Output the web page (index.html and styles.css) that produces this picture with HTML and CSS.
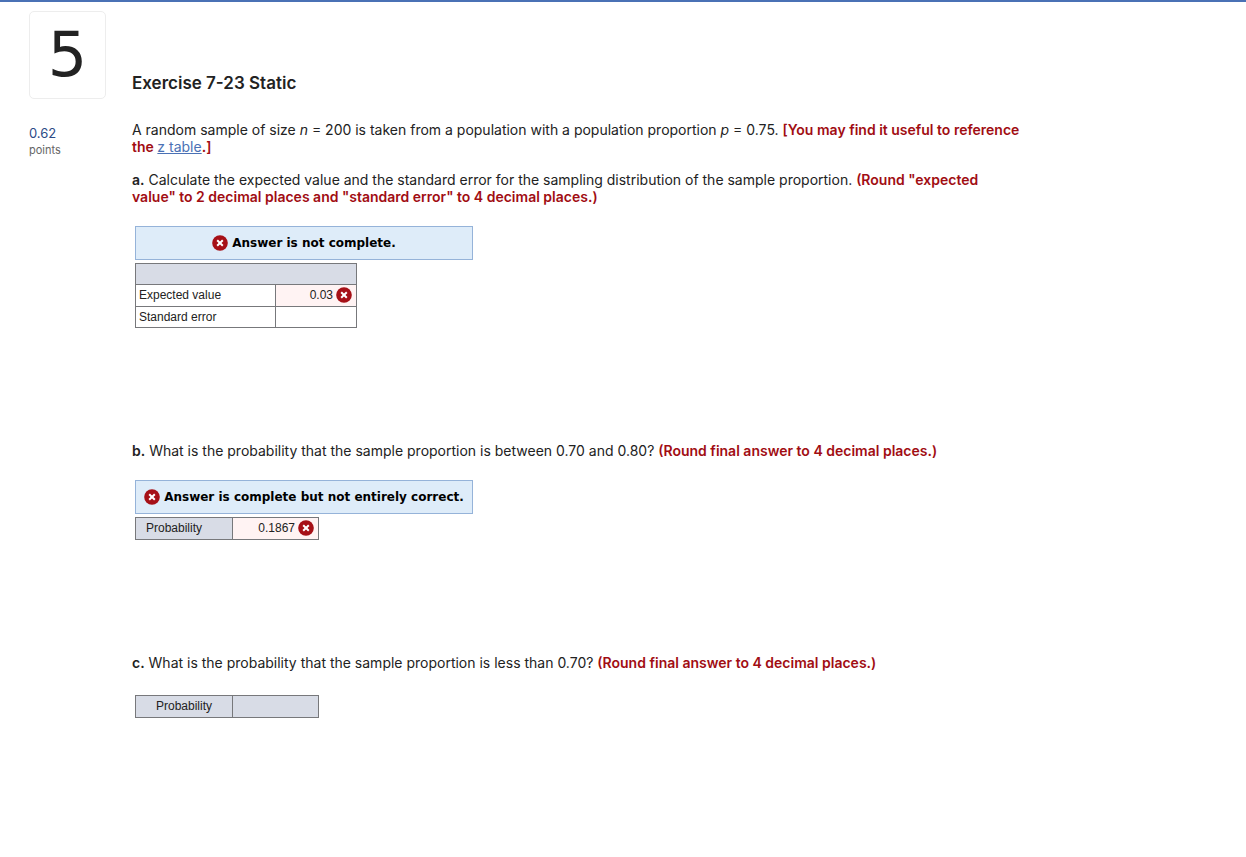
FILE: index.html
```html
<!DOCTYPE html>
<html lang="en">
<head>
<meta charset="UTF-8">
<meta name="viewport" content="width=device-width, initial-scale=1.0">
<title>Exercise 7-23 Static</title>
<link rel="stylesheet" href="styles.css">
</head>
<body>

<!-- Wrong-answer mark, reused below -->
<svg class="sprite" width="0" height="0" aria-hidden="true">
  <symbol id="wrong" viewBox="0 0 16 16">
    <circle cx="8" cy="8" r="7.8" fill="#a61017"/>
    <path d="M5.2 5.2l5.6 5.6M10.8 5.2l-5.6 5.6" stroke="#fff" stroke-width="2"/>
  </symbol>
</svg>

<div class="page">
  <aside class="sidebar">
    <div class="number">5</div>
    <div class="score">0.62</div>
    <div class="points">points</div>
  </aside>

  <main class="question">
    <h1>Exercise 7-23 Static</h1>

    <p>A random sample of size <i>n</i> = 200 is taken from a population with a population proportion <i>p</i> = 0.75. <b class="note">[You may find it useful to reference the <a href="#">z table</a>.]</b></p>

    <section class="part">
      <p><b>a.</b> Calculate the expected value and the standard error for the sampling distribution of the sample proportion. <b class="note">(Round "expected value" to 2 decimal places and "standard error" to 4 decimal places.)</b></p>
      <div class="answer">
        <div class="banner"><svg class="mark"><use href="#wrong"/></svg>Answer is not complete.</div>
        <table class="grid values">
          <colgroup>
            <col class="name">
            <col>
          </colgroup>
          <tr class="short"><th colspan="2"></th></tr>
          <tr>
            <td>Expected value</td>
            <td class="wrong"><div class="cell">0.03<svg class="mark"><use href="#wrong"/></svg></div></td>
          </tr>
          <tr class="short">
            <td>Standard error</td>
            <td></td>
          </tr>
        </table>
      </div>
    </section>

    <section class="part">
      <p><b>b.</b> What is the probability that the sample proportion is between 0.70 and 0.80? <b class="note">(Round final answer to 4 decimal places.)</b></p>
      <div class="answer">
        <div class="banner"><svg class="mark"><use href="#wrong"/></svg>Answer is complete but not entirely correct.</div>
        <table class="grid single">
          <tr>
            <th class="graded">Probability</th>
            <td class="wrong"><div class="cell">0.1867<svg class="mark"><use href="#wrong"/></svg></div></td>
          </tr>
        </table>
      </div>
    </section>

    <section class="part">
      <p><b>c.</b> What is the probability that the sample proportion is less than 0.70? <b class="note">(Round final answer to 4 decimal places.)</b></p>
      <div class="answer">
        <table class="grid single">
          <tr>
            <th>Probability</th>
            <th></th>
          </tr>
        </table>
      </div>
    </section>
  </main>
</div>

</body>
</html>
```
FILE: styles.css
```css
* {
  box-sizing: border-box;
}

body {
  margin: 0;
  border-top: 2px solid #4a71b5;
  background: #fff;
  color: #222;
  font-family: Inter, "Liberation Sans", sans-serif;
  font-size: 14px;
  line-height: 17px;
}

.sprite {
  position: absolute;
}

.page {
  display: flex;
  gap: 26px;
  padding: 9px 29px 0;
}

/* Question number and points */
.sidebar {
  flex: 0 0 77px;
}

.number {
  display: flex;
  align-items: center;
  justify-content: center;
  height: 88px;
  margin-bottom: 26px;
  border: 1px solid #ededed;
  border-radius: 5px;
  font-family: "DejaVu Sans", sans-serif;
  font-size: 62px;
  line-height: 62px;
}

.score {
  color: #2c4a86;
  font-size: 13px;
}

.points {
  color: #666;
  font-size: 11px;
}

/* Question body */
.question {
  flex: 0 1 889px;
  padding-top: 60px;
}

h1 {
  margin: 0 0 26px;
  font-size: 17px;
  font-weight: 600;
  line-height: 24px;
}

p {
  margin: 0 0 16px;
}

b {
  font-weight: 600;
}

.note {
  color: #a10d13;
}

a {
  color: #4a71b5;
  font-weight: 400;
}

.part {
  margin-bottom: 114px;
}

.answer {
  padding: 5px 3px 0;
  font-family: "Liberation Sans", Arial, sans-serif;
  font-size: 12px;
}

.banner {
  display: flex;
  align-items: center;
  justify-content: center;
  gap: 4px;
  max-width: 338px;
  height: 34px;
  border: 1px solid #95b3d9;
  background: #deecf9;
  color: #000;
  font-family: "DejaVu Sans", Verdana, sans-serif;
  font-weight: 700;
  white-space: nowrap;
}

.mark {
  flex: none;
  width: 16px;
  height: 16px;
}

/* Answer tables */
.grid {
  margin-top: 3px;
  border-collapse: collapse;
  table-layout: fixed;
}

.grid th,
.grid td {
  height: 22px;
  padding: 0 3px;
  border: 1px solid #77787b;
  font-weight: 400;
}

.grid .short th,
.grid .short td {
  height: 21px;
}

.grid th {
  background: #d8dce6;
}

.values {
  width: 222px;
}

.values .name {
  width: 140px;
}

.single {
  width: 184px;
}

.single th:first-child {
  width: 97px;
}

.single .graded {
  padding-left: 10px;
  text-align: left;
}

.grid .wrong {
  background: #fff3f3;
}

.cell {
  display: flex;
  align-items: center;
  justify-content: flex-end;
  gap: 3px;
  padding: 0 1px 1px 0;
}
```
